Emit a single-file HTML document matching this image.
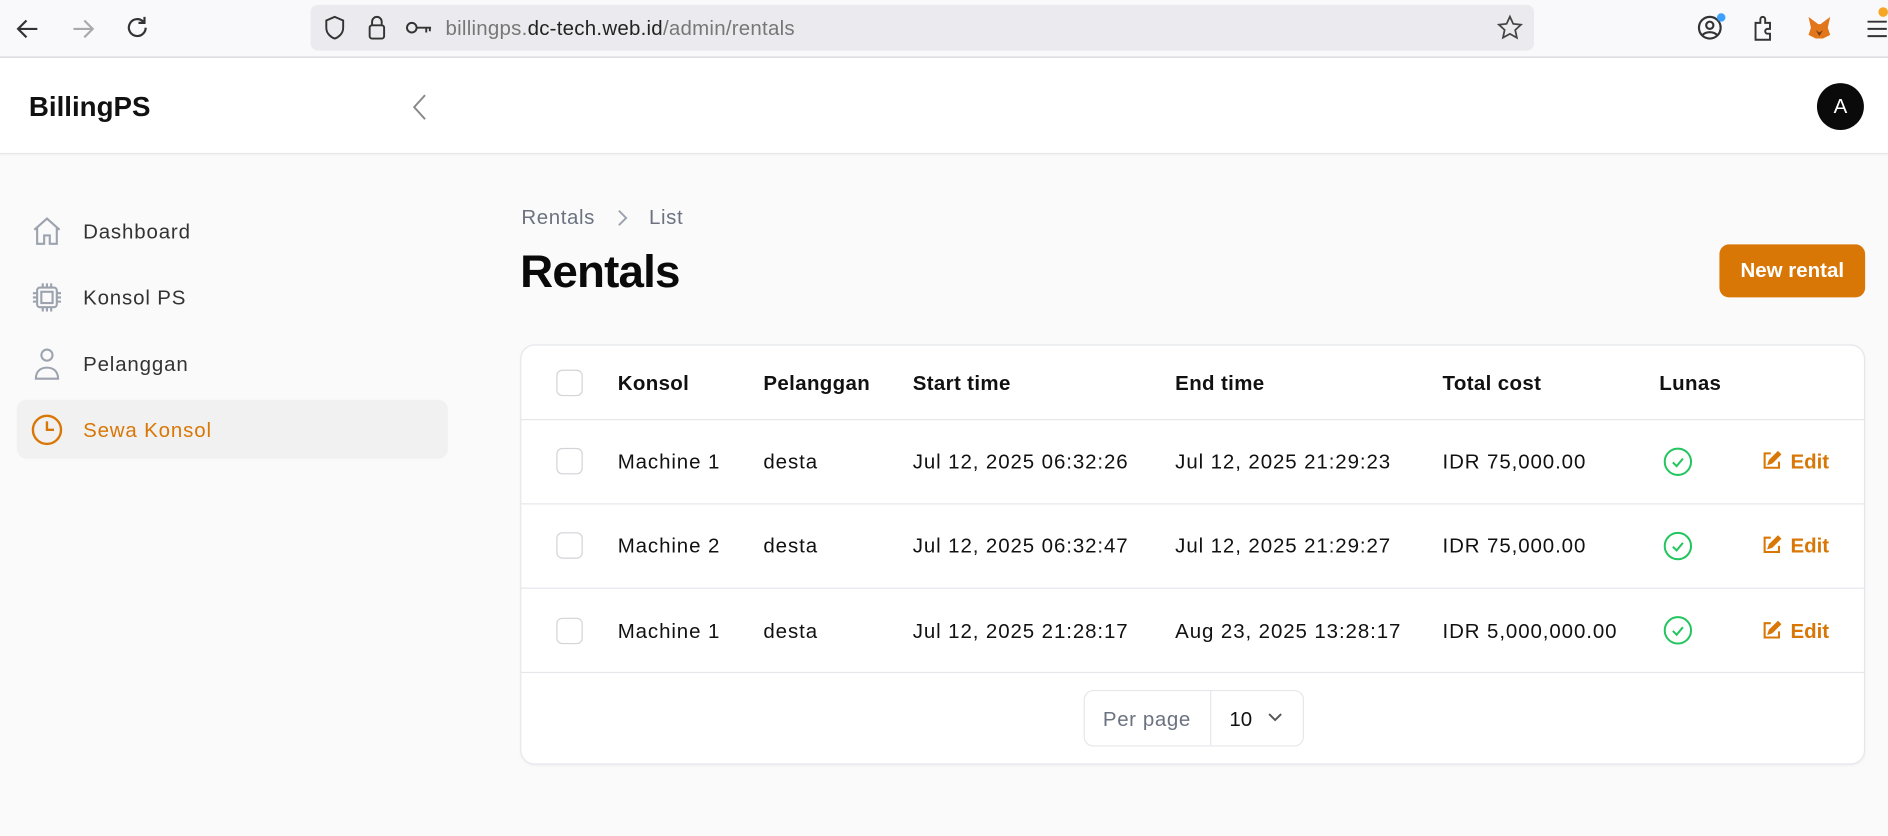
<!DOCTYPE html>
<html><head><meta charset="utf-8"><style>
*{box-sizing:border-box;margin:0;padding:0}
html,body{width:1888px;height:835px;overflow:hidden;background:#fafafa}
#w{position:absolute;left:0;top:0;width:1568px;height:694px;transform:scale(1.20408);transform-origin:0 0;font-family:"Liberation Sans",sans-serif;color:#111}
.a{position:absolute}
.tb{left:0;top:0;width:1568px;height:48px;background:#f9f9fb;border-bottom:1px solid #cfcfd4}
.url{left:258px;top:4px;width:1016px;height:38px;background:#ebebef;border-radius:6px}
.hd{left:0;top:48px;width:1568px;height:80px;background:#fff;border-bottom:1px solid #e5e7eb;box-shadow:0 1px 2px rgba(0,0,0,.04)}
.nav{left:69px;font-size:17px;color:#333;transform:translateY(-50%);letter-spacing:.7px}
.td{position:absolute;font-size:17px;color:#111;transform:translateY(-50%);letter-spacing:.75px}
.th{position:absolute;font-size:17px;font-weight:bold;color:#111;transform:translateY(-50%);letter-spacing:.3px}
.cb{position:absolute;left:29px;width:22px;height:22px;border:1px solid #d4d4d8;border-radius:5px;background:#fff;transform:translateY(-50%)}
.line{position:absolute;left:0;width:100%;height:1px;background:#e5e7eb}
svg{position:absolute}
</style></head><body><div id="w">
<div class="a tb"></div>
<svg style="left:12px;top:13px" width="22" height="22" viewBox="0 0 22 22" fill="none" stroke="#333" stroke-width="1.8"><path d="M19 11H4M10 4l-7 7 7 7"/></svg>
<svg style="left:58px;top:13px" width="22" height="22" viewBox="0 0 22 22" fill="none" stroke="#aaa" stroke-width="1.8"><path d="M3 11h15M12 4l7 7-7 7"/></svg>
<svg style="left:103px;top:12px" width="22" height="22" viewBox="0 0 22 22" fill="none" stroke="#333" stroke-width="1.8"><path d="M18 11a7 7 0 1 1-2-5M17 2v5h-5"/></svg>
<div class="a url"></div>
<svg style="left:268px;top:12px" width="20" height="22" viewBox="0 0 20 22" fill="none" stroke="#333" stroke-width="1.6"><path d="M10 2l7 3v6c0 5-4 8-7 9-3-1-7-4-7-9V5z"/></svg>
<svg style="left:304px;top:11px" width="18" height="24" viewBox="0 0 18 24" fill="none" stroke="#333" stroke-width="1.6"><rect x="3" y="10" width="12" height="11" rx="2"/><path d="M5 10V7a4 4 0 0 1 8 0v3"/></svg>
<svg style="left:336px;top:14px" width="24" height="18" viewBox="0 0 24 18" fill="none" stroke="#333" stroke-width="1.6"><circle cx="6" cy="9" r="4"/><path d="M10 9h12M18 9v4M21 9v3"/></svg>
<div class="a" style="left:370px;top:24px;transform:translateY(-50%);font-size:17px;color:#777;letter-spacing:.2px">billingps.<span style="color:#222">dc-tech.web.id</span>/admin/rentals</div>
<svg style="left:1243px;top:12px" width="22" height="22" viewBox="0 0 24 24" fill="none" stroke="#444" stroke-width="1.6"><path d="M12 2l3 6.5 7 .8-5.2 4.8 1.5 7L12 17.6 5.7 21l1.5-7L2 9.3l7-.8z"/></svg>
<svg style="left:1409px;top:12px" width="22" height="22" viewBox="0 0 22 22" fill="none" stroke="#333" stroke-width="1.8"><circle cx="11" cy="11" r="9"/><circle cx="11" cy="9" r="3"/><path d="M5 17c3-3 9-3 12 0"/></svg>
<div class="a" style="left:1426px;top:11px;width:7px;height:7px;border-radius:50%;background:#3da0ff"></div>
<svg style="left:1454px;top:11px" width="22" height="24" viewBox="0 0 22 24" fill="none" stroke="#333" stroke-width="1.6"><path d="M4 8h4V5a2 2 0 0 1 4 0v3h4v5h-2a2 2 0 0 0 0 4h2v5H4z"/></svg>
<svg style="left:1500px;top:12px" width="22" height="22" viewBox="0 0 22 22"><path d="M2 2l8 6h2l8-6-2 9 2 6-6 3H8l-6-3 2-6z" fill="#e2761b"/><path d="M8 13l3 2 3-2-3 5z" fill="#763e1a"/></svg>
<svg style="left:1550px;top:16px" width="18" height="16" viewBox="0 0 18 16" stroke="#333" stroke-width="1.6"><path d="M1 2h16M1 8h16M1 14h16"/></svg>
<div class="a" style="left:1560px;top:6px;width:8px;height:8px;border-radius:50%;background:#f5a623"></div>

<div class="a hd"></div>
<div class="a" style="left:24px;top:89px;transform:translateY(-50%);font-size:23px;font-weight:bold;color:#111">BillingPS</div>
<svg style="left:340px;top:77px" width="16" height="24" viewBox="0 0 16 24" fill="none" stroke="#888" stroke-width="1.6"><path d="M13 2L4 12l9 10"/></svg>
<div class="a" style="left:1509px;top:69px;width:39px;height:39px;border-radius:50%;background:#0a0a0a;color:#fff;font-size:17px;text-align:center;line-height:39px">A</div>

<svg style="left:25px;top:178px" width="28" height="28" viewBox="0 0 24 24" fill="none" stroke="#9ca3af" stroke-width="1.5"><path d="M3 11l9-8 9 8M5 9v12h5v-6h4v6h5V9"/></svg>
<div class="a nav" style="top:193px">Dashboard</div>
<svg style="left:25px;top:233px" width="28" height="28" viewBox="0 0 24 24" fill="none" stroke="#9ca3af" stroke-width="1.5"><rect x="5" y="5" width="14" height="14" rx="2"/><rect x="8" y="8" width="8" height="8"/><path d="M9 2v3M12 2v3M15 2v3M9 19v3M12 19v3M15 19v3M2 9h3M2 12h3M2 15h3M19 9h3M19 12h3M19 15h3"/></svg>
<div class="a nav" style="top:248px">Konsol PS</div>
<svg style="left:25px;top:288px" width="28" height="30" viewBox="0 0 24 26" fill="none" stroke="#9ca3af" stroke-width="1.5"><circle cx="12" cy="6" r="4"/><path d="M4 23c0-5 3-8 8-8s8 3 8 8z"/></svg>
<div class="a nav" style="top:303px">Pelanggan</div>
<div class="a" style="left:14px;top:332px;width:358px;height:49px;border-radius:8px;background:#f1f1f2"></div>
<svg style="left:25px;top:343px" width="28" height="28" viewBox="0 0 24 24" fill="none" stroke="#d97706" stroke-width="1.7"><circle cx="12" cy="12" r="10"/><path d="M12 6v6h5"/></svg>
<div class="a nav" style="top:358px;color:#d97706">Sewa Konsol</div>

<div class="a" style="left:433px;top:181px;transform:translateY(-50%);font-size:17px;color:#6b7280;letter-spacing:.5px">Rentals</div>
<svg style="left:511px;top:173px" width="12" height="16" viewBox="0 0 12 16" fill="none" stroke="#9ca3af" stroke-width="1.6"><path d="M3 2l6 6-6 6"/></svg>
<div class="a" style="left:539px;top:181px;transform:translateY(-50%);font-size:17px;color:#6b7280;letter-spacing:.5px">List</div>
<div class="a" style="left:432px;top:227px;transform:translateY(-50%);font-size:38px;font-weight:bold;color:#0a0a0a;letter-spacing:-.7px">Rentals</div>
<div class="a" style="left:1428px;top:203px;width:121px;height:44px;border-radius:8px;background:#d97706;color:#fff;font-weight:bold;font-size:17px;text-align:center;line-height:44px">New rental</div>

<div class="a" style="left:432px;top:286px;width:1117px;height:349px;background:#fff;border:1px solid #e5e7eb;border-radius:12px;box-shadow:0 1px 2px rgba(0,0,0,.04)">
 <div class="cb" style="top:31px"></div>
 <div class="th" style="left:80px;top:32px">Konsol</div>
 <div class="th" style="left:201px;top:32px">Pelanggan</div>
 <div class="th" style="left:325px;top:32px">Start time</div>
 <div class="th" style="left:543px;top:32px">End time</div>
 <div class="th" style="left:765px;top:32px">Total cost</div>
 <div class="th" style="left:945px;top:32px">Lunas</div>
 <div class="line" style="top:61px"></div>

 <div class="cb" style="top:96px"></div>
 <div class="td" style="left:80px;top:97px">Machine 1</div>
 <div class="td" style="left:201px;top:97px">desta</div>
 <div class="td" style="left:325px;top:97px">Jul 12, 2025 06:32:26</div>
 <div class="td" style="left:543px;top:97px">Jul 12, 2025 21:29:23</div>
 <div class="td" style="left:765px;top:97px">IDR 75,000.00</div>
 <div class="line" style="top:131px"></div>

 <div class="cb" style="top:166px"></div>
 <div class="td" style="left:80px;top:167px">Machine 2</div>
 <div class="td" style="left:201px;top:167px">desta</div>
 <div class="td" style="left:325px;top:167px">Jul 12, 2025 06:32:47</div>
 <div class="td" style="left:543px;top:167px">Jul 12, 2025 21:29:27</div>
 <div class="td" style="left:765px;top:167px">IDR 75,000.00</div>
 <div class="line" style="top:201px"></div>

 <div class="cb" style="top:237px"></div>
 <div class="td" style="left:80px;top:238px">Machine 1</div>
 <div class="td" style="left:201px;top:238px">desta</div>
 <div class="td" style="left:325px;top:238px">Jul 12, 2025 21:28:17</div>
 <div class="td" style="left:543px;top:238px">Aug 23, 2025 13:28:17</div>
 <div class="td" style="left:765px;top:238px">IDR 5,000,000.00</div>
 <div class="line" style="top:271px"></div>

 <div class="a" style="left:467px;top:286px;width:183px;height:47px;border:1px solid #e5e7eb;border-radius:8px;background:#fff">
  <div class="a" style="left:15px;top:24px;transform:translateY(-50%);font-size:17px;color:#6b7280;letter-spacing:.5px">Per page</div>
  <div class="a" style="left:104px;top:0;width:1px;height:45px;background:#e5e7eb"></div>
  <div class="a" style="left:120px;top:24px;transform:translateY(-50%);font-size:17px;color:#111">10</div>
  <svg style="left:151px;top:17px" width="14" height="10" viewBox="0 0 14 10" fill="none" stroke="#555" stroke-width="1.6"><path d="M2 2l5 5 5-5"/></svg>
 </div>
</div>

<svg style="left:1381px;top:371px" width="25" height="25" viewBox="0 0 24 24" fill="none" stroke="#22c55e" stroke-width="1.6"><circle cx="12" cy="12" r="10.5"/><path d="M8 12.5l3 3 5-6"/></svg>
<svg style="left:1381px;top:441px" width="25" height="25" viewBox="0 0 24 24" fill="none" stroke="#22c55e" stroke-width="1.6"><circle cx="12" cy="12" r="10.5"/><path d="M8 12.5l3 3 5-6"/></svg>
<svg style="left:1381px;top:511px" width="25" height="25" viewBox="0 0 24 24" fill="none" stroke="#22c55e" stroke-width="1.6"><circle cx="12" cy="12" r="10.5"/><path d="M8 12.5l3 3 5-6"/></svg>
<svg style="left:1463px;top:374px" width="17" height="17" viewBox="0 0 20 20" fill="none" stroke="#d97706" stroke-width="2"><path d="M9 3H3v14h14v-6"/><path d="M16 2l2 2-8 8-3 1 1-3z" fill="#d97706"/></svg>
<div class="a" style="left:1487px;top:384px;transform:translateY(-50%);font-size:17px;font-weight:bold;color:#d97706">Edit</div>
<svg style="left:1463px;top:444px" width="17" height="17" viewBox="0 0 20 20" fill="none" stroke="#d97706" stroke-width="2"><path d="M9 3H3v14h14v-6"/><path d="M16 2l2 2-8 8-3 1 1-3z" fill="#d97706"/></svg>
<div class="a" style="left:1487px;top:454px;transform:translateY(-50%);font-size:17px;font-weight:bold;color:#d97706">Edit</div>
<svg style="left:1463px;top:515px" width="17" height="17" viewBox="0 0 20 20" fill="none" stroke="#d97706" stroke-width="2"><path d="M9 3H3v14h14v-6"/><path d="M16 2l2 2-8 8-3 1 1-3z" fill="#d97706"/></svg>
<div class="a" style="left:1487px;top:525px;transform:translateY(-50%);font-size:17px;font-weight:bold;color:#d97706">Edit</div>
</div></body></html>
